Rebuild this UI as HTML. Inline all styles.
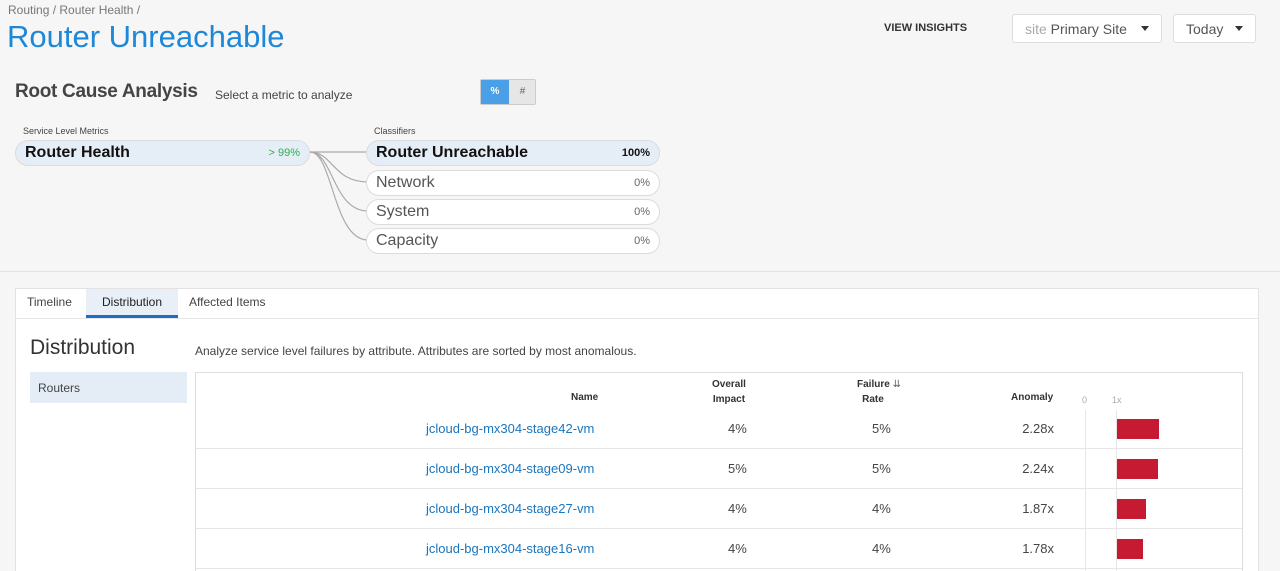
<!DOCTYPE html>
<html style="height:571px;overflow:hidden"><head><meta charset="utf-8"><style>
*{box-sizing:border-box;margin:0;padding:0}
body{width:1280px;height:571px;overflow:hidden;background:#f6f6f6;font-family:"Liberation Sans",sans-serif;color:#444;position:relative}
.a{position:absolute;white-space:nowrap}
.pill{position:absolute;border:1px solid #dcdcdc;border-radius:13px;background:#fff;height:26px;display:flex;align-items:center;justify-content:space-between;padding:0 9px}
.pill .n{font-size:16px;color:#555}
.pill .v{font-size:11px;color:#666}
.sel{background:#e5edf6}
.sel .n{color:#111;font-weight:bold;font-size:16px}
.row{position:absolute;left:195px;width:1047px;height:40px;border-bottom:1px solid #e6e6e6}
.c{position:absolute;font-size:13px;top:12px}
.r{position:absolute;font-size:13px;top:12px;right:188px;text-align:right}
.bar{position:absolute;background:#c61a32;height:20px;top:10px;left:922px}
</style></head><body>
<div class="a" style="left:8px;top:3px;font-size:12px;color:#777">Routing / Router Health /</div>
<div class="a" style="left:7px;top:19px;font-size:31px;color:#1e88d8">Router Unreachable</div>
<div class="a" style="left:884px;top:22px;font-size:11px;font-weight:bold;color:#333">VIEW INSIGHTS</div>
<div class="a" style="left:1012px;top:14px;width:150px;height:29px;background:#fff;border:1px solid #ddd;border-radius:3px;font-size:14px;padding:6px 12px;color:#555"><span style="color:#aaa">site</span> Primary Site <span style="position:absolute;right:12px;top:11px;border:4px solid transparent;border-top:5px solid #333"></span></div>
<div class="a" style="left:1173px;top:14px;width:83px;height:29px;background:#fff;border:1px solid #ddd;border-radius:3px;font-size:14px;padding:6px 12px;color:#555">Today <span style="position:absolute;right:12px;top:11px;border:4px solid transparent;border-top:5px solid #333"></span></div>

<div class="a" style="left:15px;top:81px;font-size:19px;font-weight:bold;color:#444;letter-spacing:-0.3px">Root Cause Analysis</div>
<div class="a" style="left:215px;top:88px;font-size:12px;color:#444">Select a metric to analyze</div>
<div class="a" style="left:480px;top:79px;width:56px;height:26px;border:1px solid #ccc;border-radius:2px;background:#e6e6e6;font-size:10px;color:#666"><span style="position:absolute;left:0;top:0;width:28px;height:24px;background:#4a9fe6;color:#fff;text-align:center;line-height:24px;font-weight:bold">%</span><span style="position:absolute;left:28px;width:27px;text-align:center;line-height:24px">#</span></div>

<div class="a" style="left:23px;top:126px;font-size:9px;color:#444">Service Level Metrics</div>
<div class="a" style="left:374px;top:126px;font-size:9px;color:#444">Classifiers</div>
<div class="pill sel" style="left:15px;top:140px;width:295px"><span class="n">Router Health</span><span class="v" style="color:#2bb24c">&gt; 99%</span></div>
<svg class="a" style="left:308px;top:145px" width="62" height="110" fill="none" stroke="#aaa" stroke-width="1.2">
<path d="M2 7 H60"/><path d="M2 7 C25 7 25 37 60 37"/><path d="M2 7 C25 7 25 66 60 66"/><path d="M2 7 C25 7 25 95 60 95"/></svg>
<div class="pill sel" style="left:366px;top:140px;width:294px"><span class="n">Router Unreachable</span><span class="v" style="color:#111;font-weight:bold">100%</span></div>
<div class="pill" style="left:366px;top:170px;width:294px"><span class="n">Network</span><span class="v">0%</span></div>
<div class="pill" style="left:366px;top:199px;width:294px"><span class="n">System</span><span class="v">0%</span></div>
<div class="pill" style="left:366px;top:228px;width:294px"><span class="n">Capacity</span><span class="v">0%</span></div>

<div class="a" style="left:0;top:271px;width:1280px;border-top:1px solid #e2e2e2"></div>
<div class="a" style="left:15px;top:288px;width:1244px;height:290px;background:#fff;border:1px solid #e2e2e2"></div>
<div class="a" style="left:15px;top:318px;width:1244px;border-top:1px solid #e6e6e6"></div>
<div class="a" style="left:27px;top:295px;font-size:12px;color:#444">Timeline</div>
<div class="a" style="left:86px;top:289px;width:92px;height:29px;background:#e8eff7;border-bottom:3px solid #1a6fc0;font-size:12px;color:#222;text-align:center;line-height:26px">Distribution</div>
<div class="a" style="left:189px;top:295px;font-size:12px;color:#444">Affected Items</div>

<div class="a" style="left:30px;top:336px;font-size:21px;color:#333">Distribution</div>
<div class="a" style="left:195px;top:344px;font-size:12px;color:#444">Analyze service level failures by attribute. Attributes are sorted by most anomalous.</div>
<div class="a" style="left:30px;top:372px;width:157px;height:31px;background:#e4edf6;font-size:12px;padding:9px 8px;color:#444">Routers</div>

<div class="a" style="left:195px;top:372px;width:1048px;height:210px;border:1px solid #ddd"></div>
<div class="a" style="left:1085px;top:410px;height:170px;border-left:1px solid #e6e6e6"></div>
<div class="a" style="left:1116px;top:410px;height:170px;border-left:1px solid #e6e6e6"></div>
<div class="a" style="left:571px;top:392px;font-size:10px;font-weight:bold;color:#333">Name</div>
<div class="a" style="left:712px;top:377px;font-size:10px;font-weight:bold;color:#333;text-align:center;line-height:15px">Overall<br>Impact</div>
<div class="a" style="left:857px;top:377px;font-size:10px;font-weight:bold;color:#333;text-align:center;line-height:15px">Failure <span style="color:#666;font-weight:normal">&#8650;</span><br><span style="margin-left:-12px">Rate</span></div>
<div class="a" style="left:1011px;top:392px;font-size:10px;font-weight:bold;color:#333">Anomaly</div>
<div class="a" style="left:1082px;top:395px;font-size:9px;color:#aaa">0</div>
<div class="a" style="left:1112px;top:395px;font-size:9px;color:#aaa">1x</div>

<div class="row" style="top:409px"><span class="c" style="left:231px;color:#1b75bc">jcloud-bg-mx304-stage42-vm</span><span class="c" style="left:533px">4%</span><span class="c" style="left:677px">5%</span><span class="r">2.28x</span><div class="bar" style="width:42px"></div></div>
<div class="row" style="top:449px"><span class="c" style="left:231px;color:#1b75bc">jcloud-bg-mx304-stage09-vm</span><span class="c" style="left:533px">5%</span><span class="c" style="left:677px">5%</span><span class="r">2.24x</span><div class="bar" style="width:41px"></div></div>
<div class="row" style="top:489px"><span class="c" style="left:231px;color:#1b75bc">jcloud-bg-mx304-stage27-vm</span><span class="c" style="left:533px">4%</span><span class="c" style="left:677px">4%</span><span class="r">1.87x</span><div class="bar" style="width:29px"></div></div>
<div class="row" style="top:529px"><span class="c" style="left:231px;color:#1b75bc">jcloud-bg-mx304-stage16-vm</span><span class="c" style="left:533px">4%</span><span class="c" style="left:677px">4%</span><span class="r">1.78x</span><div class="bar" style="width:26px"></div></div>
</body></html>
